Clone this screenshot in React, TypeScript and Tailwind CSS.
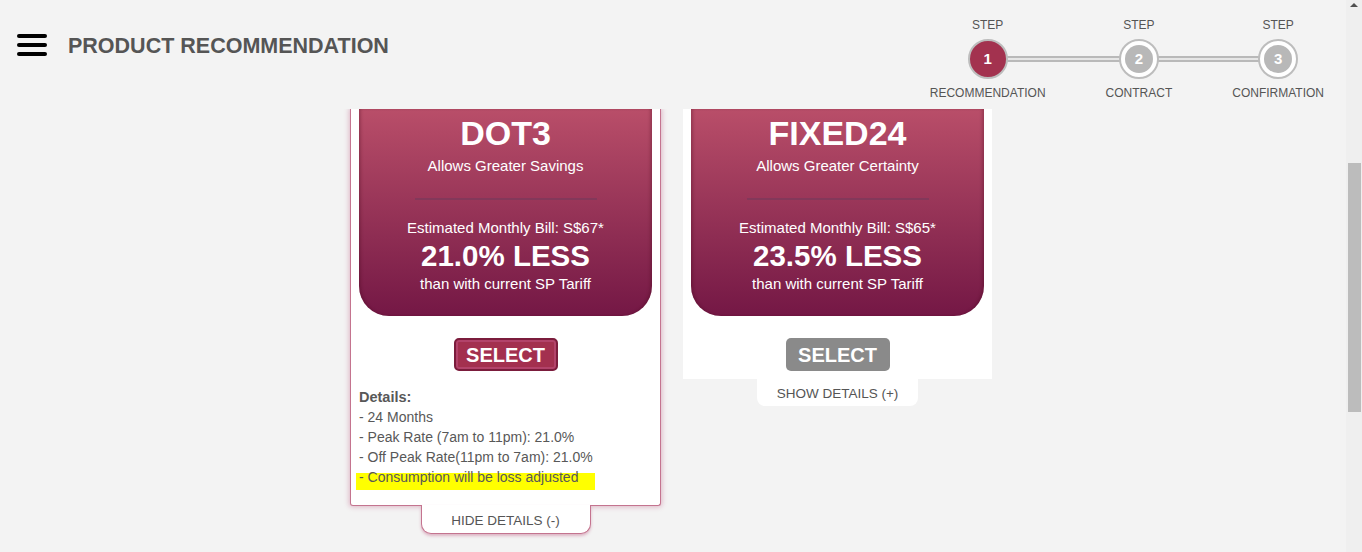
import React from "react";

const Hamburger = () => (
  <div className="ml-[17px] mt-[34px] flex flex-col gap-[5px]">
    <div className="h-[4px] w-[30px] rounded-full bg-black" />
    <div className="h-[4px] w-[30px] rounded-full bg-black" />
    <div className="h-[4px] w-[30px] rounded-full bg-black" />
  </div>
);

const Step = ({ n, label, active }: { n: number; label: string; active?: boolean }) => (
  <div className="relative z-10 flex flex-col items-center">
    <div className="text-[12px] leading-[14px] text-[#555]">STEP</div>
    {active ? (
      <div className="mt-[7px] flex h-[40px] w-[40px] items-center justify-center rounded-full border-2 border-[#bdbdbd] bg-[#a3324f] text-[15px] font-bold text-white">
        {n}
      </div>
    ) : (
      <div className="mt-[7px] flex h-[40px] w-[40px] items-center justify-center rounded-full border-2 border-[#bdbdbd] bg-white">
        <div className="flex h-[28px] w-[28px] items-center justify-center rounded-full bg-[#b8b8b8] text-[15px] font-bold text-white">
          {n}
        </div>
      </div>
    )}
    <div className="mt-[7px] text-[12px] leading-[14px] text-[#555]">{label}</div>
  </div>
);

const Stepper = () => (
  <div className="relative ml-auto mr-[22px] flex gap-[60px] pt-[18px]">
    <div className="absolute left-[58px] right-[45px] top-[56px] h-[6px] border-y-2 border-[#b9b9b9] bg-[#e6e6e6]" />
    <Step n={1} label="RECOMMENDATION" active />
    <Step n={2} label="CONTRACT" />
    <Step n={3} label="CONFIRMATION" />
  </div>
);

const Panel = ({ name, tag, bill, pct }: { name: string; tag: string; bill: string; pct: string }) => (
  <div className="flex w-[293px] flex-col items-center rounded-b-[30px] bg-linear-to-b from-[#b94e69] to-[#741745] pb-[22px] pt-[5px] text-white shadow-[inset_3px_0_3px_-1px_rgba(60,0,20,0.25),inset_-3px_0_3px_-1px_rgba(60,0,20,0.25)]">
    <div className="text-[34px] font-bold leading-[38px]">{name}</div>
    <div className="mt-[4px] text-[15px] leading-[20px]">{tag}</div>
    <div className="mt-[22px] h-[2px] w-[182px] bg-[#83385a]" />
    <div className="mt-[18px] text-[15px] leading-[20px]">Estimated Monthly Bill: {bill}</div>
    <div className="mt-[2px] text-[29.5px] font-bold leading-[32px]">{pct} LESS</div>
    <div className="mt-[2px] text-[15px] leading-[20px]">than with current SP Tariff</div>
  </div>
);

export default function App() {
  return (
    <div className="flex h-[552px] w-[1362px] overflow-hidden bg-[#f3f3f3] font-['Liberation_Sans',Arial,sans-serif]">
      <div className="flex min-w-0 flex-1 flex-col">
        <header className="relative z-20 flex h-[109px] shrink-0 items-start bg-[#f3f3f3]">
          <Hamburger />
          <div className="ml-[21px] mt-[33px] text-[21.5px] font-bold leading-[26px] text-[#555]">
            PRODUCT RECOMMENDATION
          </div>
          <Stepper />
        </header>

        <div className="flex items-start gap-[22px] pl-[350px]">
          {/* Card 1 */}
          <div className="flex flex-col items-center">
            <div className="relative z-0 w-[311px] rounded-b-[3px] border border-t-0 border-[#c4748f] bg-white px-[8px] pb-[18px] shadow-[0_0_5px_1px_rgba(195,105,140,0.45)]">
              <Panel name="DOT3" tag="Allows Greater Savings" bill="S$67*" pct="21.0%" />
              <div className="mt-[22px] flex justify-center">
                <div className="flex h-[33px] w-[104px] items-center justify-center rounded-[5px] border-2 border-[#7b1c3c] bg-[#a3304f] text-[20px] font-bold text-white shadow-[inset_0_0_0_2px_#b2436a]">
                  SELECT
                </div>
              </div>
              <div className="mt-[16px] text-[#585858]">
                <div className="text-[14.5px] font-bold leading-[20px]">Details:</div>
                <div className="text-[14px] leading-[20px]">- 24 Months</div>
                <div className="text-[14px] leading-[20px]">- Peak Rate (7am to 11pm): 21.0%</div>
                <div className="text-[14px] leading-[20px]">- Off Peak Rate(11pm to 7am): 21.0%</div>
                <div className="text-[14px] leading-[20px]">
                  <span className="-mb-[3px] -ml-[3px] inline-block bg-[linear-gradient(to_bottom,transparent_6px,#ffff00_6px)] pb-[3px] pl-[3px] pr-[17px]">
                    - Consumption will be loss adjusted
                  </span>
                </div>
              </div>
            </div>
            <div className="relative z-10 -mt-[1px] h-[29px] w-[170px] rounded-b-[10px] border border-t-0 border-[#c4748f] bg-white pt-[8px] text-center text-[13.5px] leading-[16px] text-[#555] shadow-[0_2px_3px_rgba(195,105,140,0.45)]">
              HIDE DETAILS (-)
            </div>
          </div>

          {/* Card 2 */}
          <div className="flex flex-col items-center">
            <div className="w-[309px] bg-white px-[8px] pb-[8px]">
              <Panel name="FIXED24" tag="Allows Greater Certainty" bill="S$65*" pct="23.5%" />
              <div className="mt-[22px] flex justify-center">
                <div className="flex h-[33px] w-[104px] items-center justify-center rounded-[5px] bg-[#8a8a8a] text-[20px] font-bold text-white">
                  SELECT
                </div>
              </div>
            </div>
            <div className="h-[27px] w-[161px] rounded-b-[8px] bg-white pt-[7px] text-center text-[13.5px] leading-[16px] text-[#555]">
              SHOW DETAILS (+)
            </div>
          </div>
        </div>
      </div>

      {/* Scrollbar */}
      <div className="flex w-[16px] shrink-0 flex-col bg-[#efefef]">
        <div className="mx-auto mt-[3px] h-0 w-0 border-x-[4px] border-b-[4px] border-x-transparent border-b-[#505050]" />
        <div className="ml-[2px] mt-[156px] h-[249px] w-[13px] bg-[#bcbcbc]" />
      </div>
    </div>
  );
}
